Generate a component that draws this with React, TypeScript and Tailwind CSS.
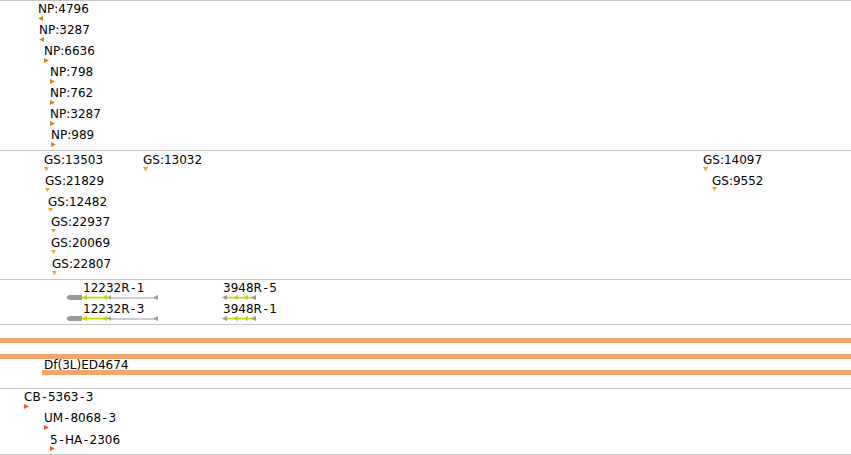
import React from 'react'

type Dir = 'left' | 'right' | 'down'

interface Feature {
  label: string
  x: number
  y: number // label top, local to its track
  gap: number // space between label and marker
  dir: Dir
}

const NP_COLOR = '#c98b17'
const GS_COLOR = '#f2a31c'
const INS_COLOR = '#f4582c'
const YG = '#c4d400'
const GR = '#9a9a9a'

const npFeatures: Feature[] = [
  { label: 'NP:4796', x: 38, y: 2, gap: 1, dir: 'left' },
  { label: 'NP:3287', x: 39, y: 23, gap: 1, dir: 'left' },
  { label: 'NP:6636', x: 44, y: 44, gap: 1, dir: 'right' },
  { label: 'NP:798', x: 50, y: 65, gap: 1, dir: 'right' },
  { label: 'NP:762', x: 50, y: 86, gap: 1, dir: 'right' },
  { label: 'NP:3287', x: 50, y: 107, gap: 1, dir: 'right' },
  { label: 'NP:989', x: 51, y: 128, gap: 1, dir: 'right' },
]

const gsFeatures: Feature[] = [
  { label: 'GS:13503', x: 44, y: 3, gap: 1, dir: 'down' },
  { label: 'GS:13032', x: 143, y: 3, gap: 1, dir: 'down' },
  { label: 'GS:14097', x: 703, y: 3, gap: 1, dir: 'down' },
  { label: 'GS:21829', x: 45, y: 24, gap: 1, dir: 'down' },
  { label: 'GS:9552', x: 712, y: 24, gap: 0, dir: 'down' },
  { label: 'GS:12482', x: 48, y: 45, gap: 0, dir: 'down' },
  { label: 'GS:22937', x: 51, y: 65, gap: 1, dir: 'down' },
  { label: 'GS:20069', x: 51, y: 86, gap: 1, dir: 'down' },
  { label: 'GS:22807', x: 52, y: 107, gap: 1, dir: 'down' },
]

const insFeatures: Feature[] = [
  { label: 'CB-5363-3', x: 24, y: 2, gap: 1, dir: 'right' },
  { label: 'UM-8068-3', x: 44, y: 23, gap: 1, dir: 'right' },
  { label: '5-HA-2306', x: 50, y: 45, gap: 0, dir: 'right' },
]

// the original renderer draws hyphens wider than DejaVu does
function Label({ text }: { text: string }) {
  const parts = text.split('-')
  return (
    <span className="whitespace-nowrap">
      {parts.map((p, i) => (
        <React.Fragment key={i}>
          {i > 0 && <span className="mx-[1.5px]">-</span>}
          {p}
        </React.Fragment>
      ))}
    </span>
  )
}

function Marker({ dir, color }: { dir: Dir; color: string }) {
  if (dir === 'down') {
    return (
      <svg width="5" height="4" viewBox="0 0 5 4">
        <polygon points="0,0 5,0 2.5,4" fill={color} />
      </svg>
    )
  }
  return (
    <svg width="5" height="5" viewBox="0 0 5 5">
      <polygon points={dir === 'left' ? '5,0 5,5 0,2.5' : '0,0 0,5 5,2.5'} fill={color} />
    </svg>
  )
}

function FeatureMarks({ items, color }: { items: Feature[]; color: string }) {
  return (
    <>
      {items.map((f) => (
        <div
          key={f.label + f.x}
          className="absolute flex flex-col items-start leading-[12px]"
          style={{ left: f.x, top: f.y, gap: f.gap }}
        >
          <Label text={f.label} />
          <Marker dir={f.dir} color={color} />
        </div>
      ))}
    </>
  )
}

function LongTranscript() {
  return (
    <svg width="96" height="6" viewBox="0 0 96 6">
      <rect x="45" y="2.5" width="46" height="1" fill={GR} />
      <polygon points="0,2.5 3,0 16,0 16,5 3,5" fill={GR} />
      <rect x="16" y="1.8" width="26" height="1.6" fill={YG} />
      <polygon points="16,2.5 21,0 21,5" fill={YG} />
      <polygon points="36,2.5 41,0 41,5" fill={YG} />
      <polygon points="41,2.5 45,0.3 45,4.7" fill={GR} />
      <polygon points="87,2.5 92,0 92,5" fill={GR} />
    </svg>
  )
}

function ShortTranscript() {
  return (
    <svg width="36" height="6" viewBox="0 0 36 6">
      <rect x="4" y="1.8" width="27" height="1.6" fill={YG} />
      <polygon points="0,2.5 5,0 5,5" fill={GR} />
      <polygon points="11,2.5 16,0 16,5" fill={YG} />
      <polygon points="21,2.5 26,0 26,5" fill={YG} />
      <polygon points="29,2.5 34,0 34,5" fill={GR} />
    </svg>
  )
}

function Transcript({ label, long, x, y }: { label: string; long: boolean; x: number; y: number }) {
  return (
    <div className="absolute flex flex-col items-start gap-px leading-[12px]" style={{ left: x, top: y }}>
      <div className={long ? 'ml-[17px]' : 'ml-px'}>
        <Label text={label} />
      </div>
      {long ? <LongTranscript /> : <ShortTranscript />}
    </div>
  )
}

export default function App() {
  return (
    <div className="w-[851px] h-[455px] overflow-hidden bg-white text-black text-[12px] font-['DejaVu_Sans',sans-serif] flex flex-col">
      {/* NP track */}
      <div className="relative h-[150px] shrink-0 border-t border-[#c4c4c4]">
        <FeatureMarks items={npFeatures} color={NP_COLOR} />
      </div>

      {/* GS track */}
      <div className="relative h-[129px] shrink-0 border-t border-[#c4c4c4]">
        <FeatureMarks items={gsFeatures} color={GS_COLOR} />
      </div>

      {/* gene models */}
      <div className="relative h-[45px] shrink-0 border-t border-[#c4c4c4]">
        <Transcript label="12232R-1" long x={66} y={2} />
        <Transcript label="12232R-3" long x={66} y={23} />
        <Transcript label="3948R-5" long={false} x={222} y={2} />
        <Transcript label="3948R-1" long={false} x={222} y={23} />
      </div>

      {/* deficiencies */}
      <div className="h-[64px] shrink-0 border-t border-[#c4c4c4] pt-[13px] flex flex-col">
        <div className="h-[5px] bg-[#f4a46c]" />
        <div className="h-[5px] mt-[11px] bg-[#f4a46c]" />
        <div className="ml-[44px] h-[11px] leading-[12px]">
          <Label text="Df(3L)ED4674" />
        </div>
        <div className="h-[5px] ml-[42px] bg-[#f4a46c]" />
      </div>

      {/* insertions */}
      <div className="relative h-[67px] shrink-0 border-y border-[#c4c4c4]">
        <FeatureMarks items={insFeatures} color={INS_COLOR} />
      </div>
    </div>
  )
}
